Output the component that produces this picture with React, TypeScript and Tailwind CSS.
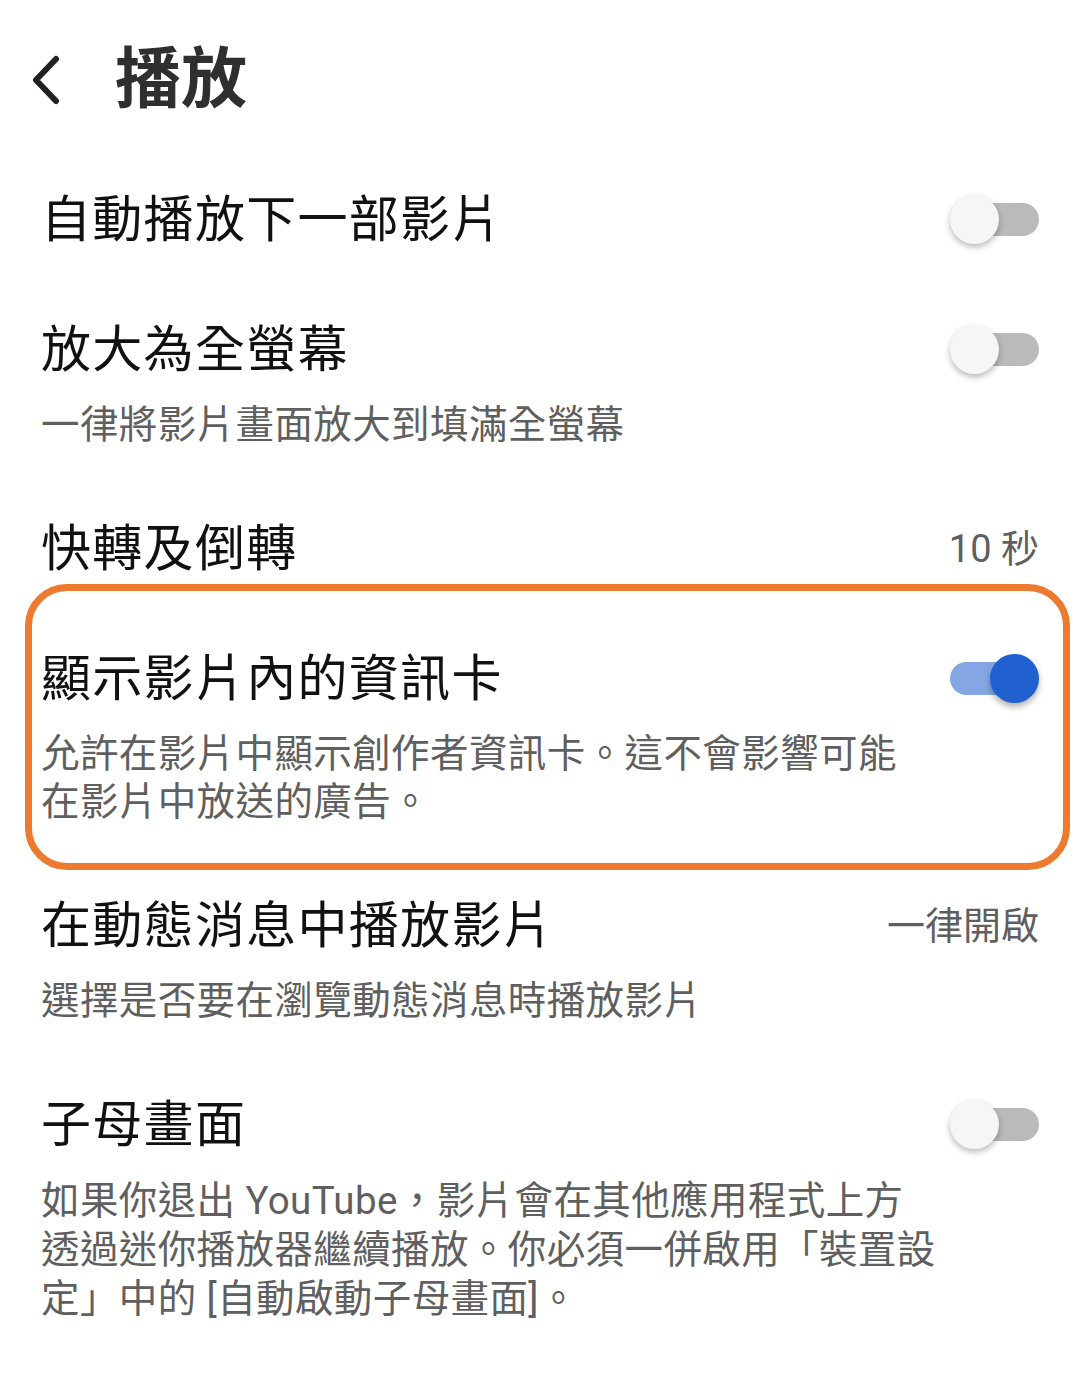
import React from "react";

const font = {
  fontFamily: 'Roboto, "Noto Sans CJK TC", "Noto Sans CJK SC", sans-serif',
};

function Toggle({ on }: { on?: boolean }) {
  return (
    <div className="relative w-[89px] h-[50px] shrink-0">
      {on ? (
        <>
          <div className="absolute left-0 top-[8px] w-[78px] h-[33px] rounded-full bg-[#84a7e4]" />
          <div className="absolute right-0 top-0 w-[49px] h-[49px] rounded-full bg-[#2060cf] shadow-[0_4px_6px_rgba(0,0,0,0.3)]" />
        </>
      ) : (
        <>
          <div className="absolute right-0 top-[8px] w-[80px] h-[33px] rounded-full bg-[#bababa]" />
          <div className="absolute left-0 top-0 w-[49px] h-[49px] rounded-full bg-[#f6f6f6] shadow-[0_3px_6px_rgba(0,0,0,0.28)]" />
        </>
      )}
    </div>
  );
}

function Row({
  title,
  right,
  sub,
  subLh = "leading-[48px]",
}: {
  title: string;
  right?: React.ReactNode;
  sub?: React.ReactNode;
  subLh?: string;
}) {
  return (
    <div className="px-[41px] py-[35px]">
      <div className="flex items-center justify-between">
        <div className="text-[50px] leading-[60px] tracking-[1.3px] text-[#111111]">{title}</div>
        {right}
      </div>
      {sub && (
        <div className={`mt-[21px] text-[38.5px] ${subLh} tracking-[0.4px] text-[#5f5f5f]`}>{sub}</div>
      )}
    </div>
  );
}

export default function App() {
  return (
    <div className="w-[1080px] h-[1378px] bg-white overflow-hidden" style={font}>
      {/* header */}
      <div className="h-[155px] flex items-center pt-[4px]">
        <svg width="34" height="50" viewBox="0 0 34 50" className="ml-[29px]">
          <path
            d="M27 4 L7 25 L27 46"
            fill="none"
            stroke="#222"
            strokeWidth="6"
            strokeLinecap="round"
            strokeLinejoin="round"
          />
        </svg>
        <h1 className="ml-[52px] text-[66px] leading-[70px] font-bold text-[#2f2f2f]">播放</h1>
      </div>

      <Row title="自動播放下一部影片" right={<Toggle />} />
      <Row title="放大為全螢幕" right={<Toggle />} sub="一律將影片畫面放大到填滿全螢幕" />
      <Row
        title="快轉及倒轉"
        right={<span className="text-[38px] text-[#5f5f5f]">10 秒</span>}
      />

      <div className="relative">
        {/* highlight box */}
        <div className="absolute left-[25px] right-[10px] -top-[30px] -bottom-[9px] rounded-[42px] border-[7px] border-[#ec7a2f]" />
        <Row
          title="顯示影片內的資訊卡"
          right={<Toggle on />}
          sub={
            <>
              允許在影片中顯示創作者資訊卡。這不會影響可能
              <br />
              在影片中放送的廣告。
            </>
          }
        />
      </div>

      <Row
        title="在動態消息中播放影片"
        right={<span className="text-[38px] text-[#5f5f5f]">一律開啟</span>}
        sub="選擇是否要在瀏覽動態消息時播放影片"
      />
      <Row
        title="子母畫面"
        right={<Toggle />}
        subLh="leading-[49px]"
        sub={
          <>
            如果你退出 YouTube，影片會在其他應用程式上方
            <br />
            透過迷你播放器繼續播放。你必須一併啟用「裝置設
            <br />
            定」中的 [自動啟動子母畫面]。
          </>
        }
      />
    </div>
  );
}
